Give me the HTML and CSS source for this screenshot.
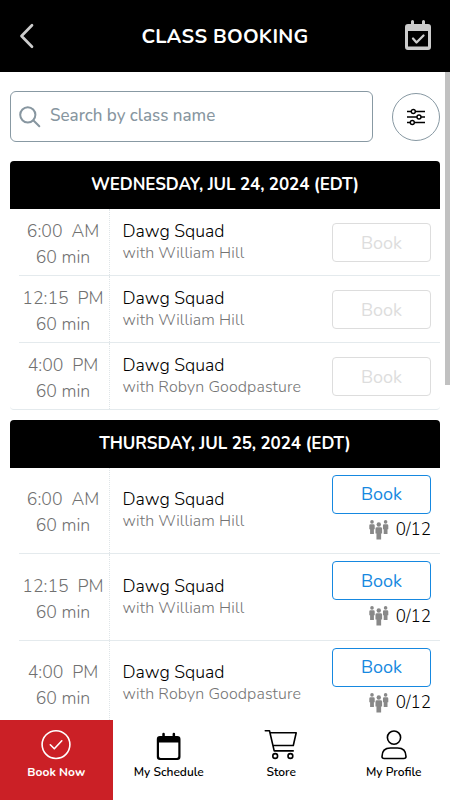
FILE: index.html
```
<!DOCTYPE html>
<html lang="en">
<head>
<meta charset="utf-8">
<title>Class Booking</title>
<link rel="stylesheet" href="styles.css">
</head>
<body>
<svg width="0" height="0" class="defs">
  <defs>
    <g id="person"><circle cx="3" cy="1.9" r="1.8"/><path d="M1.500 4.200h3q1.200 0 1.200 1.200v3.800H4.900v4.800H1.100V9.200H.3V5.400q0-1.200 1.200-1.200z"/></g>
    <g id="people"><use href="#person"/><use href="#person" x="13.6"/><path d="M6 4.800h7.600v15H6z" fill="#fff"/><g transform="translate(6.1 2.2) scale(1.23)"><use href="#person"/></g></g>
  </defs>
</svg>
<div class="app">
  <header class="topbar">
    <svg class="back" width="16" height="28" viewBox="0 0 16 28"><path d="M14 3.200 3.500 14l10.500 10.800"/></svg>
    <h1>CLASS BOOKING</h1>
    <svg class="cal" width="26" height="30" viewBox="0 0 26 30"><path d="M3 4h3V1.500a1.500 1.500 0 0 1 3 0V4h8V1.500a1.500 1.500 0 0 1 3 0V4h3a3 3 0 0 1 3 3v20a3 3 0 0 1-3 3H3a3 3 0 0 1-3-3V7a3 3 0 0 1 3-3zm0 7v15.500h20V11z" fill="#ccc" fill-rule="evenodd"/><path d="m8 18.500 3.500 4 7-7" fill="none" stroke="#ccc" stroke-width="2.3" stroke-linecap="round" stroke-linejoin="round"/></svg>
  </header>
  <main class="content">
    <div class="search-row">
      <label class="search">
        <svg width="22" height="22" viewBox="0 0 22 22"><circle cx="8.8" cy="8.8" r="7.6"/><path d="m14.500 14.500 5.800 5.800"/></svg>
        <span>Search by class name</span>
      </label>
      <button class="filter" aria-label="Filter">
        <svg width="18" height="18" viewBox="0 0 18 18"><path d="M0 3.500h18M0 9h18M0 14.500h18"/><circle cx="6.3" cy="3.5" r="2"/><circle cx="12" cy="9" r="2"/><circle cx="5.3" cy="14.5" r="2"/></svg>
      </button>
    </div>
    <section class="day">
      <h2>WEDNESDAY, JUL 24, 2024 (EDT)</h2>
      <div class="slot"><div class="time"><b>6:00&nbsp; AM</b><i>60 min</i></div><div class="info"><b>Dawg Squad</b><i>with William Hill</i></div><div class="action"><button class="book off">Book</button></div></div>
      <div class="slot"><div class="time"><b>12:15&nbsp; PM</b><i>60 min</i></div><div class="info"><b>Dawg Squad</b><i>with William Hill</i></div><div class="action"><button class="book off">Book</button></div></div>
      <div class="slot last"><div class="time"><b>4:00&nbsp; PM</b><i>60 min</i></div><div class="info"><b>Dawg Squad</b><i>with Robyn Goodpasture</i></div><div class="action"><button class="book off">Book</button></div></div>
    </section>
    <section class="day open">
      <h2>THURSDAY, JUL 25, 2024 (EDT)</h2>
      <div class="slot"><div class="time"><b>6:00&nbsp; AM</b><i>60 min</i></div><div class="info"><b>Dawg Squad</b><i>with William Hill</i></div><div class="action"><button class="book">Book</button><div class="spots"><svg width="20" height="20" viewBox="0 0 20 20"><use href="#people"/></svg><span>0/12</span></div></div></div>
      <div class="slot"><div class="time"><b>12:15&nbsp; PM</b><i>60 min</i></div><div class="info"><b>Dawg Squad</b><i>with William Hill</i></div><div class="action"><button class="book">Book</button><div class="spots"><svg width="20" height="20" viewBox="0 0 20 20"><use href="#people"/></svg><span>0/12</span></div></div></div>
      <div class="slot"><div class="time"><b>4:00&nbsp; PM</b><i>60 min</i></div><div class="info"><b>Dawg Squad</b><i>with Robyn Goodpasture</i></div><div class="action"><button class="book">Book</button><div class="spots"><svg width="20" height="20" viewBox="0 0 20 20"><use href="#people"/></svg><span>0/12</span></div></div></div>
    </section>
    <div class="scrollbar"></div>
  </main>
  <nav class="tabs">
    <a class="tab active"><svg width="34" height="32" viewBox="0 0 34 32"><circle cx="17" cy="15.6" r="13.9"/><path d="m11.300 15.800 4 4 7.500-8"/></svg><span>Book Now</span></a>
    <a class="tab"><svg width="34" height="32" viewBox="0 0 34 32"><path d="M8 7h2.300V5a1.200 1.200 0 0 1 2.500 0V7h7.800V5a1.200 1.200 0 0 1 2.500 0V7h2.200a3.200 3.200 0 0 1 3.200 3.200v17.500a3.200 3.200 0 0 1-3.200 3.200H8a3.200 3.200 0 0 1-3.200-3.200V10.200A3.200 3.200 0 0 1 8 7zM7 13.500v13.700q0 1.700 1.700 1.700h15.900q1.700 0 1.700-1.700V13.500z" fill="#000" fill-rule="evenodd" stroke="none"/></svg><span>My Schedule</span></a>
    <a class="tab"><svg width="34" height="32" viewBox="0 0 34 32"><path d="M1.300 1.800h4.200l4.700 20.100h19M6 3.700h26.200l-2.900 12.800H9.100"/><circle cx="11.2" cy="27" r="2.4"/><circle cx="26.4" cy="27" r="2.4"/></svg><span>Store</span></a>
    <a class="tab"><svg width="34" height="32" viewBox="0 0 34 32"><circle cx="17" cy="8.6" r="6.6"/><path d="M5 27.500q0-8.500 8.500-8.500h7q8.500 0 8.500 8.500 0 2-2.200 2H7.200q-2.200 0-2.200-2z"/></svg><span>My Profile</span></a>
  </nav>
</div>
</body>
</html>
```

FILE: styles.css
```
* { box-sizing: border-box; margin: 0; padding: 0; }
body { font-family: Nunito, Lato, sans-serif; background: #fff; overflow: hidden; }
b, i { font-weight: inherit; font-style: normal; display: block; }
button { font: inherit; background: #fff; }
.defs { position: absolute; }
.app { width: 450px; height: 800px; display: flex; flex-direction: column; overflow: hidden; }
.topbar { flex: 0 0 72px; background: #000; color: #fff; display: grid; grid-template-columns: 45px 1fr 45px; align-items: center; }
.topbar h1 { text-align: center; font-size: 20px; font-weight: 700; line-height: 28px; letter-spacing: 0.25px; padding-top: 1px; }
.back { margin-left: 18px; fill: none; stroke: #ccc; stroke-width: 2.7; stroke-linecap: round; stroke-linejoin: round; }
.cal { margin-top: -2px; }
.content { position: relative; flex: 1; min-height: 0; overflow: hidden; padding: 19px 10px 0; }
.scrollbar { position: absolute; right: 0; top: 0; width: 5px; height: 313px; background: #c1c1c1; }
.search-row { display: flex; justify-content: space-between; align-items: center; margin-bottom: 19px; }
.search { width: 363px; height: 51px; border: 1px solid #8899a3; border-radius: 6px; display: flex; align-items: center; padding: 0 0 2px 8px; gap: 9px; color: #8796a0; font-size: 17px; font-weight: 550; }
.search svg { fill: none; stroke: #8796a0; stroke-width: 2; stroke-linecap: round; margin-top: 2px; }
.filter { width: 48px; height: 48px; border: 1px solid #8899a3; border-radius: 50%; display: flex; align-items: center; justify-content: center; }
.filter svg { fill: #fff; stroke: #000; stroke-width: 1.4; }
.day { margin-bottom: 10px; }
.day h2 { height: 47.600px; background: #000; color: #fff; border-radius: 4px 4px 0 0; text-align: center; font-size: 17px; line-height: 47px; font-weight: 700; letter-spacing: -0.1px; }
.day.open h2 { height: 48px; }
.slot { height: 67.1px; margin-left: 9px; display: flex; border-bottom: 1px solid #e4eaed; }
.slot.last { margin-left: 0; padding-left: 9px; border-radius: 0 0 4px 4px; }
.open .slot { height: 86.4px; }
.time { width: 91px; border-right: 1px dotted #dfe5e8; padding: 9.500px 2px 0 0; text-align: center; font-size: 17.700px; line-height: 26px; font-weight: 320; color: #707070; }
.open .time { padding-top: 18.500px; }
.info { flex: 1; padding: 11px 0 0 12.500px; color: #000; font-size: 17.800px; line-height: 22px; font-weight: 340; }
.open .info { padding-top: 20.500px; }
.info i { font-size: 16px; color: #747474; font-weight: 360; letter-spacing: 0.110px; }
.action { width: 99px; margin-right: 9px; padding-top: 14.500px; }
.open .action { padding-top: 7px; }
.book { display: block; width: 99px; height: 39px; border: 1px solid #1688e0; border-radius: 4px; color: #1688e0; font-size: 18px; font-weight: 380; }
.book.off { border-color: #ddd; color: #ddd; }
.spots { display: flex; justify-content: flex-end; align-items: center; gap: 7px; height: 24px; margin-top: 4px; font-size: 17px; font-weight: 350; }
.spots svg { fill: #888; }
.tabs { flex: 0 0 80px; display: grid; grid-template-columns: repeat(4, 1fr); background: #fff; }
.tab { display: flex; flex-direction: column; align-items: center; padding-top: 9px; font-size: 12px; font-weight: 650; line-height: 16px; gap: 3px; color: #000; }
.tab svg { fill: none; stroke: currentColor; stroke-width: 1.6; stroke-linejoin: round; stroke-linecap: round; }
.tab.active { background: #cb2026; color: #fff; font-weight: 700; }
```
